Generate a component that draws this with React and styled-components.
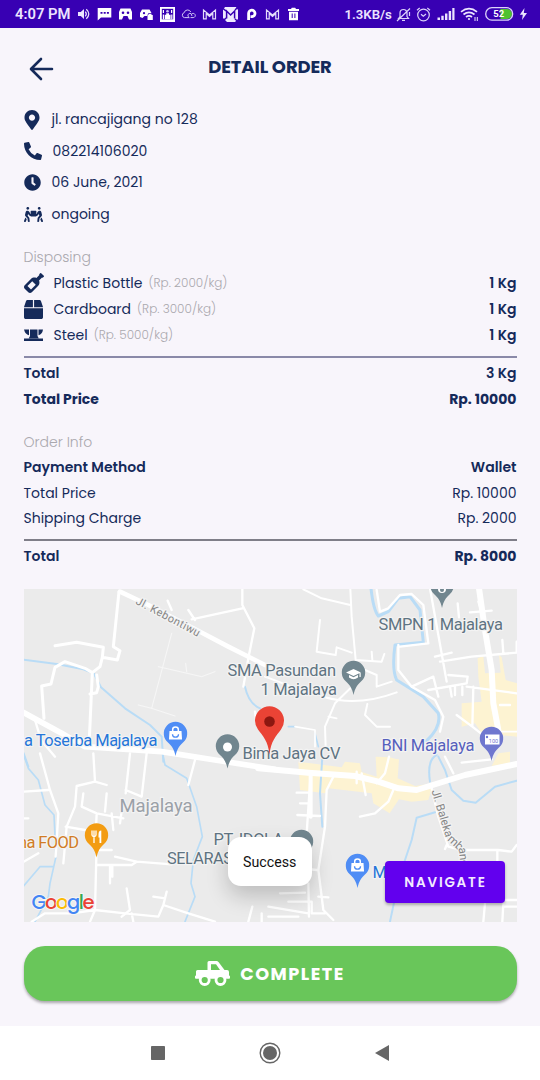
import React from 'react';
import styled, { createGlobalStyle } from 'styled-components';
import {
  FaMapMarkerAlt, FaPhoneAlt, FaClock, FaPeopleCarry, FaWineBottle, FaBox,
} from 'react-icons/fa';

const NAVY = '#152a5a';

const Global = createGlobalStyle`
  * { box-sizing: border-box; }
  body { margin: 0; background: #f8f5fb; }
`;

const Screen = styled.div`
  width: 540px;
  height: 1080px;
  display: flex;
  flex-direction: column;
  overflow: hidden;
  background: #f8f5fb;
  color: ${NAVY};
  font-family: Poppins, Inter, 'Open Sans', sans-serif;
`;

const StatusBar = styled.div`
  height: 28px;
  flex: none;
  background: #3800b3;
  color: #ece4ff;
  display: flex;
  align-items: center;
  justify-content: space-between;
  padding: 0 12px 0 15px;
  font-family: Roboto, sans-serif;
  font-weight: 600;
`;

const StatusGroup = styled.div`
  display: flex;
  align-items: center;
  gap: ${(p) => p.$gap || 6}px;
`;

const StatusText = styled.span`
  width: ${(p) => p.$width}px;
  font-size: ${(p) => p.$size}px;
  white-space: nowrap;
`;

const Glyph = styled.svg`
  display: block;
  flex: none;
  overflow: visible;
`;

const Header = styled.header`
  height: 76px;
  flex: none;
  display: grid;
  grid-template-columns: 60px 1fr 60px;
  align-items: center;
  padding-top: 2px;
`;

const BackButton = styled.button`
  border: 0;
  padding: 3px 0 0 29px;
  background: none;
`;

const Title = styled.h1`
  margin: 0;
  text-align: center;
  font-size: 18px;
  line-height: 24px;
  font-weight: 700;
  letter-spacing: -0.12px;
`;

const Content = styled.main`
  flex: 1;
  display: flex;
  flex-direction: column;
  padding: 0 23.5px;
`;

const InfoRow = styled.div`
  height: 31.5px;
  display: flex;
  align-items: center;
  font-size: 14px;
`;

const IconCell = styled.span`
  width: ${(p) => p.$width || 28}px;
  display: flex;
  align-items: center;
  margin-left: ${(p) => p.$shift || 0}px;
`;

const SectionLabel = styled.h2`
  margin: ${(p) => p.$top}px 0 0;
  height: 26px;
  line-height: 26px;
  font-size: 14px;
  font-weight: 300;
  color: #aaa8ae;
`;

const Row = styled.div`
  height: ${(p) => p.$height || 25.5}px;
  display: flex;
  align-items: center;
  font-size: 14px;
  font-weight: ${(p) => p.$weight || 400};
`;

const Unit = styled.span`
  margin-left: 6px;
  font-size: 12px;
  font-weight: 300;
  color: #aaa8ae;
`;

const Amount = styled.span`
  margin-left: auto;
  font-weight: ${(p) => p.$weight || 'inherit'};
`;

const Rule = styled.hr`
  width: 100%;
  height: 2px;
  border: 0;
  background: ${(p) => p.$color};
  margin: 7.4px 0 2.8px;
`;

const MapCard = styled.section`
  position: relative;
  height: 333px;
  margin-top: 19.5px;
  background: #ebebeb;
`;

const MapDrawing = styled.svg`
  display: block;
  width: 493px;
  height: 333px;
  font-family: Roboto, sans-serif;
`;

const Toast = styled.div`
  position: absolute;
  left: 204px;
  top: 248px;
  width: 84.5px;
  height: 49px;
  border-radius: 13px;
  background: #fff;
  color: #111;
  box-shadow: 0 10px 22px rgba(0, 0, 0, 0.2);
  display: flex;
  align-items: center;
  justify-content: center;
  padding-top: 1px;
  font: 400 14.2px Roboto, sans-serif;
`;

const NavigateButton = styled.button`
  position: absolute;
  right: 11.5px;
  bottom: 18.5px;
  width: 120px;
  height: 42px;
  border: 0;
  border-radius: 4px;
  background: #6200ee;
  color: #f3eaff;
  box-shadow: 0 2px 3px rgba(0, 0, 0, 0.28);
  padding: 2px 0 0 1px;
  font: 600 13.5px Poppins, Inter, sans-serif;
  letter-spacing: 1.8px;
`;

const CompleteButton = styled.button`
  flex: none;
  height: 55.5px;
  margin-top: 24px;
  border: 0;
  border-radius: 21px;
  background: #69c65a;
  color: #fff;
  box-shadow: 0 2px 3px rgba(0, 0, 0, 0.32);
  display: flex;
  align-items: center;
  justify-content: center;
  gap: 10px;
  padding-bottom: 1px;
  font: 700 17.7px Poppins, Inter, sans-serif;
  letter-spacing: 1.5px;
`;

const NavBar = styled.nav`
  height: 54px;
  flex: none;
  background: #fff;
  display: flex;
  justify-content: center;
  align-items: center;
  gap: 94px;
  padding: 0 1px 1px 0;
`;

const MailM = () => (
  <Glyph width="15" height="14" viewBox="0 0 15 14" fill="none" stroke="#e4dcfb" strokeWidth="1.2">
    <path d="M1.5 11.8V3l6 5 6-5v8.8h-2.7V6.600L7.500 9.500 4.200 6.600v5.200z" />
  </Glyph>
);

function StatusIcons() {
  return (
    <>
      <Glyph width="15" height="14" viewBox="0 0 15 14" fill="#ece4ff">
        <path d="M2 5h2.800L8 2v10L4.800 9H2z" />
        <path d="M9.300 4.700q2 2.300 0 4.600M10.300 2.300q5 4.700 0 9.400" fill="none" stroke="#ece4ff" strokeWidth="1.200" />
      </Glyph>
      <Glyph width="15" height="14" viewBox="0 0 15 14">
        <path fill="#fff" d="M.7 1h13.600v9.500H4L.7 13.500z" />
        <path fill="#3800b3" d="M3.500 5h2v1.700h-2zM6.700 5h2v1.700h-2zM9.900 5h2v1.700h-2z" />
      </Glyph>
      <Glyph width="15" height="14" viewBox="0 0 15 14">
        <path fill="#fff" d="M2.500 1.500h10l1.500 3.500v7.500h-3L9.500 9h-4L4 12.500H1V5z" />
        <circle cx="5" cy="5.800" r="1.300" fill="#3800b3" /><circle cx="10" cy="5.800" r="1.300" fill="#3800b3" />
      </Glyph>
      <Glyph width="15" height="14" viewBox="0 0 15 14">
        <path fill="#fff" d="M3 2.500h7.500L12.500 6H9.500L8 9H5.500L3.500 11 1 10V6z" />
        <circle cx="5" cy="6.200" r="1.100" fill="#3800b3" />
        <path fill="#fff" d="M8.500 8h1V6.800h3V8h1.300v5H8.500z" />
      </Glyph>
      <Glyph width="15" height="15" viewBox="0 0 15 15">
        <path fill="#fff" d="M0 0h15v15H0z" />
        <path d="M1.800 1.800h11.400v10.500H1.800z" fill="#3800b3" />
        <path d="M2.800 3h1.200v3H2.800zM11 3h1.200v3H11zM6.200 6.200h2.800v1.500h1.600v4.600H4.700V7.700h1.500zM2.800 7.500H4v4.800H2.800zM11.200 7.500h1.200v4.800h-1.200z" fill="#fff" />
        <circle cx="7.500" cy="4.300" r="1.300" fill="#cfc4f5" />
      </Glyph>
      <Glyph width="15" height="14" viewBox="0 0 15 14" fill="none" stroke="#cfc4f5" strokeWidth="1">
        <path d="M8.300 10.600H3.500a2.500 2.500 0 0 1-.3-4.900A3.500 3.500 0 0 1 9.800 5M8.300 10.600Q6.300 9.500 7 7.800A2.300 2.300 0 0 1 10 6.500L11 9M9.500 10.600h2.700a2.100 2.100 0 1 0-1.800-3.200" />
      </Glyph>
      <MailM />
      <Glyph width="15" height="15" viewBox="0 0 15 15">
        <path fill="#efe9ff" d="M2 0h11l2 3v9l-3 3H4l-4-4V3z" />
        <path d="M3.600 11.500V4l4 4 4-4v7.500M0 1.500 3 4M12 12l3 2.500M12 3l3-3M1 13l2-2" fill="none" stroke="#3800b3" strokeWidth="1.500" />
      </Glyph>
      <Glyph width="15" height="14" viewBox="0 0 15 14" fill="none" stroke="#fff" strokeWidth="2.800">
        <path d="M4.600 13V6.500a3.200 3.200 0 1 1 3.500 3.100H6.500" />
      </Glyph>
      <MailM />
      <Glyph width="15" height="14" viewBox="0 0 15 14">
        <path fill="#fff" d="M2 2h3l.8-1.300h3.400L10 2h3v2H2zM3 4.700h9v8.600H3z" />
        <path d="M6.200 6.500v4.500M8.900 6.500v4.500" stroke="#3800b3" strokeWidth="1" />
      </Glyph>
    </>
  );
}

function DeviceIcons() {
  const line = '#dcd2fa';
  return (
    <>
      <Glyph width="15" height="15" viewBox="0 0 15 15" fill="none" stroke={line} strokeWidth="1.200">
        <path d="M2.500 11.500 4 9.500V6a3.500 3.500 0 0 1 7 0v3.500l1.500 2zM6 13.300h3M14 1.500 1 14M13.500 5v4" />
      </Glyph>
      <Glyph width="15" height="15" viewBox="0 0 15 15" fill="none" stroke={line} strokeWidth="1.200">
        <circle cx="7.500" cy="8" r="5.800" /><path d="M5 7.200 7.300 9.200 10 7M1 3.200 3.700 1M14 3.200 11.300 1" />
      </Glyph>
      <Glyph width="18" height="14" viewBox="0 0 18 14" fill="#ece4ff">
        <path d="M.5 10.500h2.500V13H.5zM4.300 8.800h2.400V13H4.300zM8 6.500h2.400V13H8zM11.700 4h2.400v9h-2.400zM15.300 1h2.200v12h-2.200z" />
      </Glyph>
      <Glyph width="19" height="14" viewBox="0 0 19 14" fill="none" stroke="#ece4ff" strokeWidth="1.700">
        <path d="M1 4.800q8-6.400 16 0M3.500 7.500q5.500-4.300 11 0M6 10q3-2.400 6 0" />
        <circle cx="9" cy="12" r="1.100" fill="#ece4ff" stroke="none" />
        <path d="M15 10v4M17.300 10v4" strokeWidth="1" />
      </Glyph>
      <Glyph width="29" height="14" viewBox="0 0 29 14">
        <path d="M14 2h6.500a5 5 0 0 1 0 10H14z" fill="#4ec22f" transform="translate(1.500 0)" />
        <rect x=".7" y=".7" width="27" height="12.500" rx="6.200" fill="none" stroke={line} strokeWidth="1.300" />
        <text x="13.800" y="10.200" textAnchor="middle" fontSize="9.500" fontWeight="700" fill="#fff">52</text>
      </Glyph>
      <Glyph width="9" height="14" viewBox="0 0 9 14" fill="#ece4ff"><path d="M5.500 1 .8 7.700h3L3 13l5-7H4.800z" /></Glyph>
    </>
  );
}

const SteelIcon = () => (
  <Glyph width="19" height="13" viewBox="0 0 19 13" fill={NAVY}>
    <path d="M0 .5h5v5.700Q1 5 0 .5zM6 .5h7.500v8H6zM14.500.5H19q-.6 4.500-4.500 5.700zM4.800 9.200 6 7h7.500l1.200 2.200zM0 9.600h19v2.400H0z" />
  </Glyph>
);

const TruckIcon = () => (
  <Glyph width="35" height="25" viewBox="0 0 35 25">
    <path
      fill="#fff"
      fillRule="evenodd"
      d="M12.500 9V1.500Q12.500 0 14 0h7.500q1.200 0 2 1L29.500 9h2.500q2 0 2 2v3.500q1 0 1 1V17q0 .8-1 .8H1q-1 0-1-.8v-1.500q0-1 1-1V10.500Q1 9 2.500 9zM16 3.300V9h9L21 3.300z"
    />
    <g fill="#69c65a" stroke="#fff" strokeWidth="2.800">
      <circle cx="9.700" cy="19" r="4.500" />
      <circle cx="25.500" cy="19" r="4.500" />
    </g>
  </Glyph>
);

/* Map pin whose tip sits at (x, y). */
const Pin = ({ x, y, color, children }) => (
  <g transform={`translate(${x} ${y})`}>
    <path d="M0 0C-1.500-7-4-10.500-7.500-13.500A11.700 11.700 0 1 1 7.500-13.500C4-10.500 1.500-7 0 0z" fill={color} />
    {children}
  </g>
);

const Bag = () => (
  <>
    <path d="M-6-25H6l.5 8.500h-13z" fill="#fff" />
    <path d="M-2.800-24.500v-2a2.800 2.500 0 0 1 5.600 0v2" fill="none" stroke="#fff" strokeWidth="1.500" />
    <path d="M-3-21.800a3 3 0 0 0 6 0" fill="none" stroke="#4f8df5" strokeWidth="1.300" />
  </>
);

const Label = styled.text`
  fill: ${(p) => p.$color};
  font-size: ${(p) => p.$size || 16.5}px;
  stroke: #f3f3f3;
  stroke-width: 2.5px;
  stroke-linejoin: round;
  paint-order: stroke;
`;

const tile = (x, y) => `translate(${x} ${y}) scale(.33333)`;

function StreetMap() {
  return (
    <MapDrawing viewBox="24 589 493 333">
      <rect x="23" y="588" width="495" height="336" fill="#ebebeb" />

      <g fill="#fdf3d2">
        <g transform={tile(265, 580)}>
          <path d="M638 235 655 228 660 280 707 278 702 225 710 232 722 300 756 310V470L700 465 680 440 650 460 630 430 590 440V370L650 365 640 290z" />
          <path d="M335 530 375 532 400 540H335z" />
        </g>
        <g transform={tile(265, 750)}>
          <path d="M100 35 230 52 240 35 285 40 290 66 335 80 332 20 402 28 398 85 450 108 505 100 490 150 440 155 402 148 374 190 325 160 320 130 190 115 180 130 105 120zM700 10 735 5V38L680 48z" />
        </g>
      </g>

      <g fill="none" stroke="#b9dcf6" strokeLinecap="round" strokeLinejoin="round">
        <g transform={tile(15, 580)} strokeWidth="6">
          <path d="M26 239 125 252 205 268 236 280 258 322 330 385 405 435 440 470 445 545M690 320Q700 370 735 385" />
          <path d="M26 520 40 560" />
        </g>
        <g transform={tile(265, 580)} strokeWidth="9">
          <path d="M318 25Q325 90 340 108L370 95 400 55 435 50 465 90 475 187 390 195Q380 270 395 300L475 350 520 400Q530 440 485 482" />
          <path d="M70 440H90M150 460 160 500" strokeWidth="5" />
        </g>
        <g transform={tile(15, 750)} strokeWidth="5">
          <path d="M26 15 40 55 70 90 90 165 117 195 123 320 105 400 100 440 60 515M26 408 75 350H115M443 10 450 45 515 85 545 170 562 260 535 330 528 400 540 440 510 515" />
        </g>
        <g transform={tile(265, 750)} strokeWidth="6">
          <path d="M172 20 165 130 172 230M515 15Q485 30 495 95M520 20 540 60 560 120 595 152 632 158 690 110 755 92M375 515 395 420 420 330 440 270 455 203 510 187" />
        </g>
      </g>

      <g fill="none" stroke="#fff" strokeLinecap="round" strokeLinejoin="round">
        <g transform={tile(15, 580)} strokeWidth="9">
          <path d="M315 35 400 75 545 150 640 200 750 255" strokeWidth="14" />
          <path d="M312 35 295 200 315 212 307 240 262 232 265 202 185 187 120 197M262 232 255 260 232 278 210 265 150 245 120 262 108 312 80 318 87 415M232 278 222 500M245 285 250 320 245 338 225 342" />
          <path d="M682 28V75L718 145 700 235 685 320M530 118 682 85M520 90 540 120M458 62 470 90M60 420 78 480 120 530M720 395 725 430" strokeWidth="7" />
          <path d="M470 160 410 385 370 375M410 385 480 408M430 260 560 290 600 275M512 250 515 275" strokeWidth="3" stroke="#f7f7f7" />
          <path d="M15 392 140 460 210 500 440 515 600 540 780 568" strokeWidth="17" />
        </g>
        <g transform={tile(265, 580)} strokeWidth="8">
          <path d="M115 28 170 55 256 75M256 28 260 110 272 240M165 120 155 215 212 225 215 202 260 218M272 240 350 245 358 222M320 215 322 240M0 290 80 320M180 352Q280 380 395 337M300 270 335 285V320L380 305M256 325 210 370 180 440 182 500M307 372 300 405 335 440H375" strokeWidth="6" />
          <path d="M495 25 545 305M510 230 560 218M525 245 620 230 755 218M640 65 650 95M578 70 582 112M615 97 680 92M705 375H735M712 180 715 220M755 185V215M400 195 400 270 440 320 510 360 535 410 525 455M335 30 345 95M345 95 370 85 405 45 440 42 475 75 490 190 405 200M440 320 505 290 520 350M550 285 608 290 605 310 490 330M555 320 560 350M570 320V345M592 320V345M605 320 755 340M625 320 622 440M622 440 575 405M622 440 660 470" strokeWidth="7" />
          <path d="M642 25 660 150 680 270 685 370 700 450" strokeWidth="18" />
          <path d="M190 410 215 415M150 450 150 500M90 440 150 450M700 455H755" strokeWidth="5" />
        </g>
        <g transform={tile(15, 750)} strokeWidth="7">
          <path d="M75 10 105 120 130 190 122 320M26 125 100 120M235 10 240 95 185 108 180 170 155 230 145 340M240 95 275 105M205 130 200 170 245 190 325 205M275 130 270 185M345 10 332 130M395 10 380 140M332 120 380 140M322 170 315 220M290 190 295 240M540 30 520 105M245 190 240 300M152 230 210 240M26 205H40M26 335 70 310" />
          <path d="M244 320 240 480 225 515M245 345H350L365 335 470 343M300 320 365 335M245 300H290M285 345V400M292 345V380M335 415 345 480 320 500M455 425 445 465 520 490 600 515M415 440 450 445M445 465 430 500 330 490 240 480 170 490 90 490 50 515M350 490 355 515M700 515 712 470M740 515V490" />
        </g>
        <g transform={tile(265, 750)} strokeWidth="7">
          <path d="M137 70 125 250M95 128H130M105 160H130M97 195 165 198M205 80 185 120 180 230 160 360 175 480 205 510M275 65V100M290 70 302 135M372 20 360 70 335 100M385 120 370 155 330 190 285 200M45 430 120 428M20 345 155 360M160 440 190 442M130 400 132 500M70 455H140V490H180M10 500H100M10 470 130 490M540 20 565 70M590 38 680 28M500 115 520 200 550 290 590 300 700 300 740 305 755 285M545 285 540 297M697 300V345M720 450H755M720 470H755M660 460 655 515M715 460 712 515" />
          <path d="M137 70V200" strokeWidth="12" />
          <path d="M-20 55 130 68 270 78 340 95 400 115 455 120 600 75 755 42" strokeWidth="18" />
        </g>
      </g>

      <Label $color="#858585" $size={11} transform="translate(135 603.500) rotate(28)" textLength="71">Jl. Kebontiwu</Label>
      <Label $color="#858585" $size={11.5} transform="translate(431.500 791) rotate(73)" textLength="49">Jl. Baleka</Label>
      <Label $color="#858585" $size={11.5} transform="translate(447 840) rotate(42)">mb</Label>
      <Label $color="#858585" $size={11.5} transform="translate(458.500 848) rotate(82)">ang</Label>

      <Label $color="#5f7482" x="378.500" y="630" textLength="124.500">SMPN 1 Majalaya</Label>
      <Label $color="#5f7482" x="227.500" y="675.500" textLength="108.500">SMA Pasundan</Label>
      <Label $color="#5f7482" x="260.500" y="695" textLength="76.500">1 Majalaya</Label>
      <Label $color="#2576d9" x="24" y="746" textLength="133.500">a Toserba Majalaya</Label>
      <Label $color="#5f7482" x="242.500" y="758.500" textLength="98">Bima Jaya CV</Label>
      <Label $color="#5660bd" x="381.500" y="751" textLength="93">BNI Majalaya</Label>
      <Label $color="#9ba1a8" $size={18.5} x="119.500" y="812" textLength="73">Majalaya</Label>
      <Label $color="#d17c25" x="18" y="847.500" textLength="61">na FOOD</Label>
      <Label $color="#5f7482" x="213.500" y="844.500" textLength="70">PT. IDOLA</Label>
      <Label $color="#5f7482" x="167" y="863.500" textLength="66">SELARAS</Label>
      <Label $color="#2576d9" x="372.500" y="878">M</Label>

      <Pin x={442} y={608} color="#71868f"><circle cy="-19" r="4" fill="#fff" /><circle cy="-18" r="2" fill="#71868f" /></Pin>
      <Pin x={353.500} y={695} color="#71868f">
        <path d="M-7.500-22.500 0-26 7.500-22.500 0-19zM-4.500-20 0-17.700 4.500-20V-17.500Q0-14-4.500-17.500zM6-22h1.200v4H6z" fill="#fff" />
      </Pin>
      <Pin x={227.500} y={768.500} color="#71868f"><circle cy="-21.500" r="4.500" fill="#fff" /></Pin>
      <Pin x={301.500} y={864} color="#71868f" />
      <Pin x={175.500} y={756} color="#4f8df5"><Bag /></Pin>
      <Pin x={357.500} y={888} color="#4f8df5"><Bag /></Pin>
      <Pin x={491.500} y={761} color="#6f77cf">
        <path d="M-6.500-26.500H8v10H-6.500z" fill="#fff" /><circle cx="-4.500" cy="-24" r="1.200" fill="#6f77cf" />
        <text x="2" y="-18" fontSize="5.500" textAnchor="middle" fill="#6f77cf">100</text>
      </Pin>
      <Pin x={96.500} y={857.500} color="#f39c12">
        <path d="M-4.500-27v4.500Q-4.500-21-2.500-21V-14.500M-2.500-27v6M-.5-27v4.500Q-.5-21-2.500-21" fill="none" stroke="#fff" strokeWidth="1.300" />
        <path d="M2-23Q2-27 4.800-27V-14.500H3V-20H2z" fill="#fff" />
      </Pin>
      <path d="M269.500 754.500C268 741 263 736 258 729.500A14.500 14.500 0 1 1 281 729.500C276 736 271 741 269.500 754.500z" fill="#ea4335" />
      <circle cx="269.500" cy="721.500" r="5.300" fill="#8c1710" />

      <text x="31.500" y="908.500" fontSize="19.500" fontFamily="Poppins, Inter, sans-serif" fontWeight="500" textLength="63" stroke="#f5f5f5" strokeWidth="2" paintOrder="stroke">
        <tspan fill="#4285f4">G</tspan><tspan fill="#ea4335">o</tspan><tspan fill="#fbbc05">o</tspan><tspan fill="#4285f4">g</tspan><tspan fill="#34a853">l</tspan><tspan fill="#ea4335">e</tspan>
      </text>
    </MapDrawing>
  );
}

export default function App() {
  return (
    <Screen>
      <Global />
      <StatusBar>
        <StatusGroup>
          <StatusText $width={55} $size={14.8}>4:07 PM</StatusText>
          <StatusIcons />
        </StatusGroup>
        <StatusGroup $gap={5.5}>
          <StatusText $width={45.5} $size={13.2}>1.3KB/s</StatusText>
          <DeviceIcons />
        </StatusGroup>
      </StatusBar>

      <Header>
        <BackButton aria-label="Back">
          <Glyph width="24" height="24" viewBox="0 0 24 24" fill="none" stroke={NAVY} strokeWidth="2.600">
            <path d="M23 12H2.500M12 2 2 12l10 10" strokeLinecap="round" strokeLinejoin="round" />
          </Glyph>
        </BackButton>
        <Title>DETAIL ORDER</Title>
      </Header>

      <Content>
        <InfoRow><IconCell $width={30} $shift={-2}><FaMapMarkerAlt size={20} /></IconCell>jl. rancajigang no 128</InfoRow>
        <InfoRow><IconCell $width={29}><FaPhoneAlt size={18} /></IconCell>082214106020</InfoRow>
        <InfoRow><IconCell><FaClock size={17} /></IconCell>06 June, 2021</InfoRow>
        <InfoRow><IconCell><FaPeopleCarry size={19} /></IconCell>ongoing</InfoRow>

        <SectionLabel $top={14}>Disposing</SectionLabel>
        <Row $height={26.2}>
          <IconCell $width={30}><FaWineBottle size={20} /></IconCell>
          <span>Plastic Bottle</span><Unit>(Rp. 2000/kg)</Unit><Amount $weight={600}>1 Kg</Amount>
        </Row>
        <Row $height={26.2}>
          <IconCell $width={30}><FaBox size={19} /></IconCell>
          <span>Cardboard</span><Unit>(Rp. 3000/kg)</Unit><Amount $weight={600}>1 Kg</Amount>
        </Row>
        <Row $height={26.2}>
          <IconCell $width={30}><SteelIcon /></IconCell>
          <span>Steel</span><Unit>(Rp. 5000/kg)</Unit><Amount $weight={600}>1 Kg</Amount>
        </Row>
        <Rule $color="#8a89a8" />
        <Row $weight={600}><span>Total</span><Amount>3 Kg</Amount></Row>
        <Row $weight={700}><span>Total Price</span><Amount>Rp. 10000</Amount></Row>

        <SectionLabel $top={17.2}>Order Info</SectionLabel>
        <Row $weight={600}><span>Payment Method</span><Amount>Wallet</Amount></Row>
        <Row><span>Total Price</span><Amount>Rp. 10000</Amount></Row>
        <Row><span>Shipping Charge</span><Amount>Rp. 2000</Amount></Row>
        <Rule $color="#7f7e88" />
        <Row $weight={600}><span>Total</span><Amount $weight={700}>Rp. 8000</Amount></Row>

        <MapCard>
          <StreetMap />
          <Toast>Success</Toast>
          <NavigateButton>NAVIGATE</NavigateButton>
        </MapCard>

        <CompleteButton><TruckIcon />COMPLETE</CompleteButton>
      </Content>

      <NavBar>
        <Glyph width="14" height="14" viewBox="0 0 14 14"><rect width="14" height="14" rx=".8" fill="#666" /></Glyph>
        <Glyph width="22" height="22" viewBox="0 0 22 22"><circle cx="11" cy="11" r="9.800" fill="none" stroke="#666" strokeWidth="1.400" /><circle cx="11" cy="11" r="7" fill="#666" /></Glyph>
        <Glyph width="14" height="16" viewBox="0 0 14 16"><path d="M14 0v16L0 8z" fill="#666" /></Glyph>
      </NavBar>
    </Screen>
  );
}
